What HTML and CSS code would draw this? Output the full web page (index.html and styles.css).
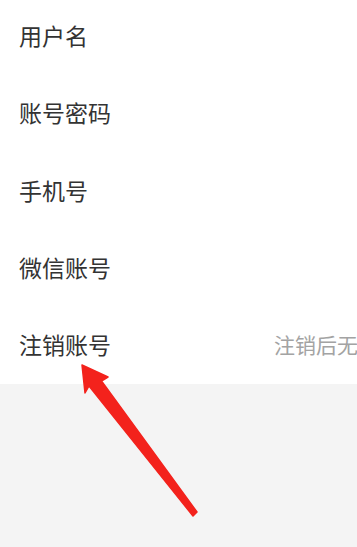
FILE: index.html
```html
<!DOCTYPE html>
<html lang="zh-CN">
<head>
<meta charset="utf-8">
<title>账号设置</title>
<link rel="stylesheet" href="styles.css">
</head>
<body>
<div class="page">
  <ul class="list">
    <li class="row"><span class="label">用户名</span></li>
    <li class="row"><span class="label">账号密码</span></li>
    <li class="row"><span class="label">手机号</span></li>
    <li class="row"><span class="label">微信账号</span></li>
    <li class="row"><span class="label">注销账号</span><span class="hint">注销后无法恢复</span></li>
  </ul>
  <svg class="arrow" width="357" height="547" viewBox="0 0 357 547" aria-hidden="true">
    <polygon points="82,365 108,377 101.5,381 197,512 193,516 89,386 85,393" fill="#f3221c" stroke="#f3221c" stroke-width="1.5" stroke-linejoin="round"/>
  </svg>
</div>
</body>
</html>
```
FILE: styles.css
```css
html, body {
  margin: 0;
  padding: 0;
  background: #f4f4f4;
}
.page {
  position: relative;
  width: 357px;
  height: 547px;
  overflow: hidden;
  font-family: "Noto Sans CJK SC", "Noto Sans", sans-serif;
}
.list {
  list-style: none;
  margin: -2px 0 0 0;
  padding: 0;
  background: #ffffff;
}
.row {
  box-sizing: border-box;
  display: flex;
  align-items: center;
  height: 77.3px;
  padding: 0 0 3px 19px;
  overflow: hidden;
  white-space: nowrap;
}
.label {
  flex: 1;
  font-size: 23px;
  color: #333333;
}
.hint {
  flex: 0 0 83px;
  overflow: hidden;
  font-size: 21px;
  color: #a3a3a3;
}
.arrow {
  position: absolute;
  left: 0;
  top: 0;
}
```
